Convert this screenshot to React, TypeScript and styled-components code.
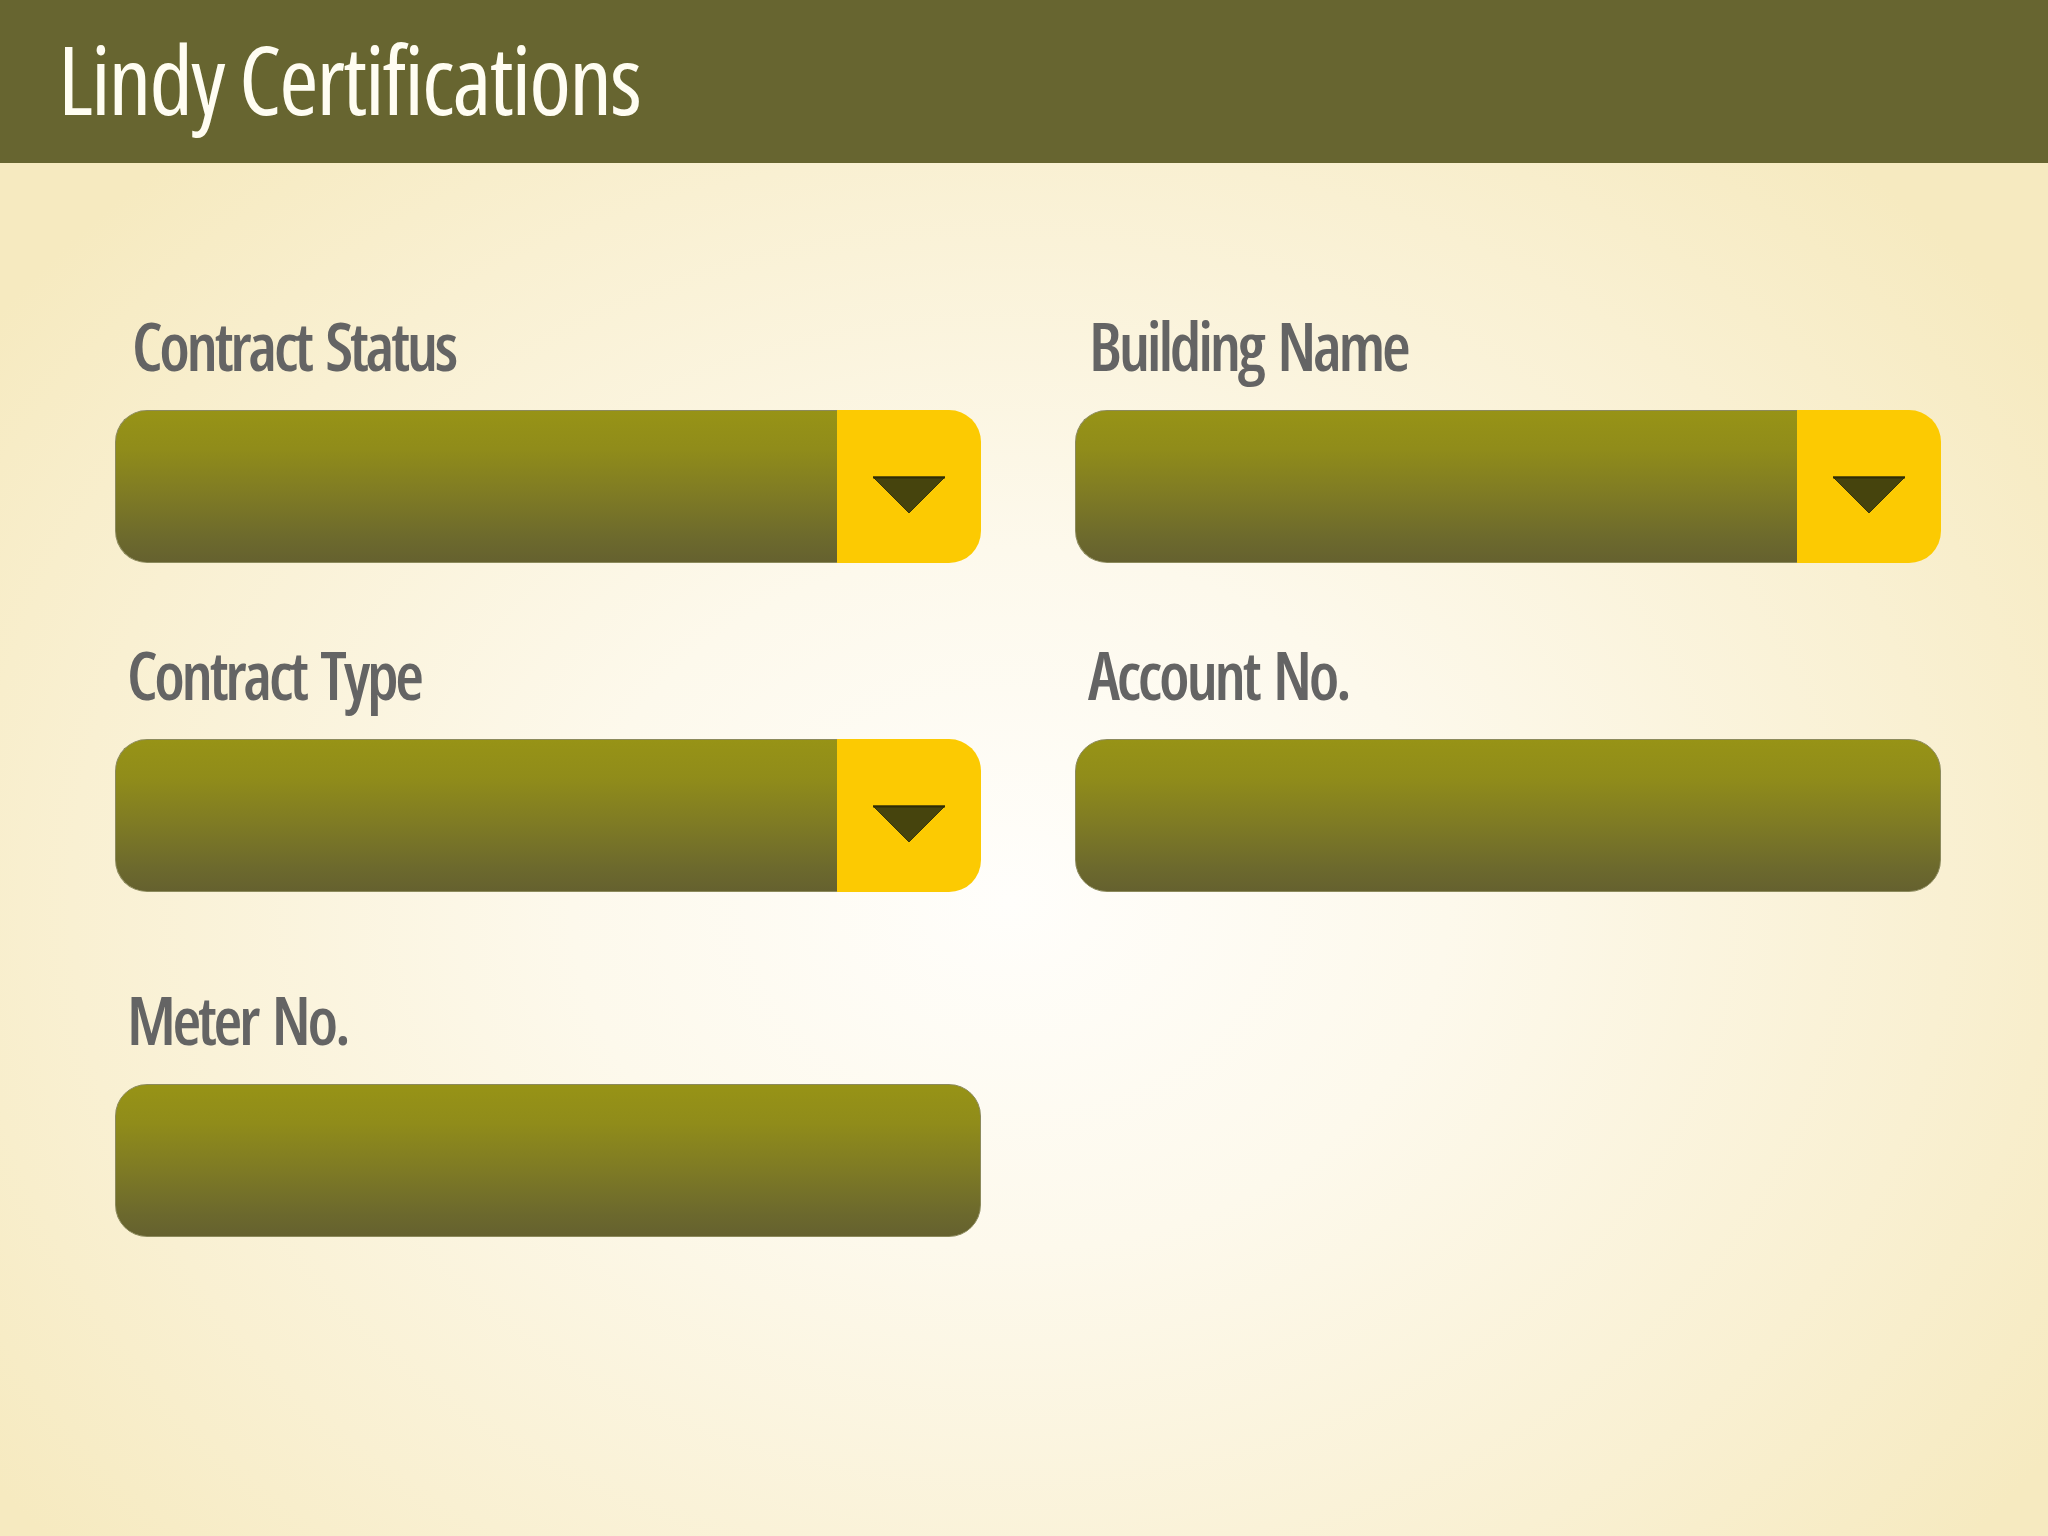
import React from "react";
import styled, { createGlobalStyle } from "styled-components";

const GlobalStyle = createGlobalStyle`
  html, body {
    margin: 0;
    padding: 0;
  }
  body {
    background: #f7ebc3;
  }
`;

const Page = styled.div`
  width: 2048px;
  min-height: 1536px;
  display: flex;
  flex-direction: column;
  background: radial-gradient(
    ellipse 1250px 1000px at 1010px 900px,
    #fffefb 0%,
    #fdf9ec 35%,
    #f9f0d2 75%,
    #f6eac0 100%
  );
  font-family: "Open Sans", "Liberation Sans", sans-serif;
`;

const Header = styled.header`
  height: 163px;
  background: #676530;
  display: flex;
  align-items: flex-start;
  padding-left: 58px;
  box-sizing: border-box;
`;

const Title = styled.h1`
  margin: 31px 0 0;
  font-family: "Open Sans", sans-serif;
  font-stretch: 75%;
  font-weight: 400;
  font-size: 95px;
  line-height: 1;
  color: #fffdf2;
  letter-spacing: -2px;
`;

const Form = styled.main`
  display: grid;
  grid-template-columns: 866px 866px;
  column-gap: 94px;
  padding: 142px 0 0 115px;
`;

const Group = styled.div<{ $extraTop?: number }>`
  display: flex;
  flex-direction: column;
  margin-top: ${(p) => p.$extraTop ?? 0}px;
  margin-bottom: 71px;
`;

const Label = styled.label<{ $indent?: number }>`
  display: block;
  padding-left: ${(p) => p.$indent ?? 14}px;
  font-family: "Open Sans", sans-serif;
  font-stretch: 75%;
  font-weight: 600;
  font-size: 66px;
  line-height: 80px;
  height: 80px;
  color: #646464;
  letter-spacing: -3.3px;
  word-spacing: 6px;
  margin-bottom: 25px;
`;

const Field = styled.div`
  height: 153px;
  display: flex;
`;

const Bar = styled.div<{ $hasButton: boolean }>`
  flex: 1;
  box-sizing: border-box;
  border: 1px solid #8c8a5c;
  border-right-width: ${(p) => (p.$hasButton ? 0 : 1)}px;
  border-radius: ${(p) => (p.$hasButton ? "32px 0 0 32px" : "32px")};
  background: linear-gradient(
    to bottom,
    #979316 0%,
    #908c1a 25%,
    #7f7b24 55%,
    #6c692d 85%,
    #65612f 100%
  );
`;

const DropButton = styled.div`
  width: 144px;
  flex: none;
  background: #fcca02;
  border-radius: 0 32px 32px 0;
  display: flex;
  align-items: center;
  justify-content: center;
  padding-top: 17px;
  box-sizing: border-box;
`;

const Arrow = () => (
  <svg width="74" height="38" viewBox="0 0 74 38">
    <polygon points="1,1 73,1 37,37" fill="#46440d" stroke="#3a380a" strokeWidth="1" />
    <line x1="1" y1="1.5" x2="73" y2="1.5" stroke="#2e2c06" strokeWidth="2" />
  </svg>
);

type FieldDef = { label: string; dropdown: boolean; indent?: number; extraTop?: number };

const fields: FieldDef[] = [
  { label: "Contract Status", dropdown: true, indent: 17 },
  { label: "Building Name", dropdown: true, indent: 14 },
  { label: "Contract Type", dropdown: true, indent: 12 },
  { label: "Account No.", dropdown: false, indent: 13 },
  { label: "Meter No.", dropdown: false, indent: 12, extraTop: 16 },
];

export default function App() {
  return (
    <>
      <GlobalStyle />
      <Page>
        <Header>
          <Title>Lindy Certifications</Title>
        </Header>
        <Form>
          {fields.map((f) => (
            <Group key={f.label} $extraTop={f.extraTop}>
              <Label $indent={f.indent}>{f.label}</Label>
              <Field>
                <Bar $hasButton={f.dropdown} />
                {f.dropdown && (
                  <DropButton>
                    <Arrow />
                  </DropButton>
                )}
              </Field>
            </Group>
          ))}
        </Form>
      </Page>
    </>
  );
}
